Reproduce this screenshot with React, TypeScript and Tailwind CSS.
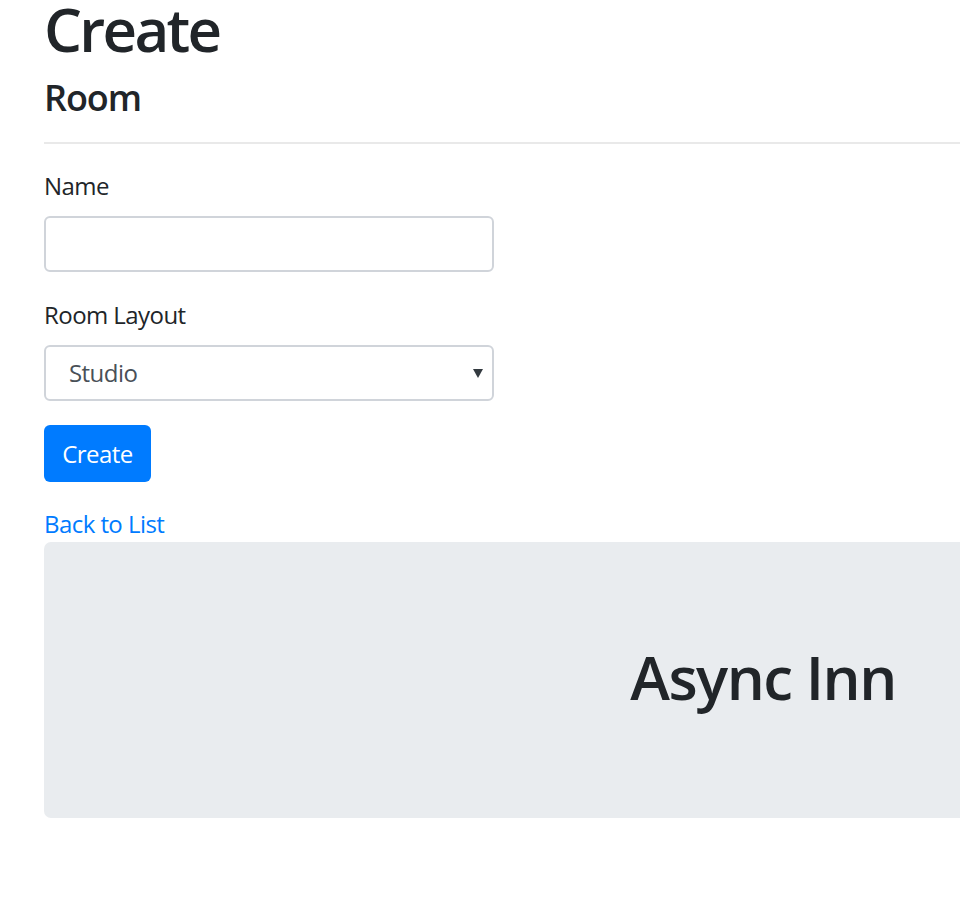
import React from 'react';

const fontStack = "[font-family:'Open_Sans','Noto_Sans',sans-serif]";

export default function App() {
  return (
    <div className={`w-full min-h-screen overflow-hidden bg-white text-[#212529] tracking-[-0.035em] ${fontStack}`}>
      <div className="ml-[44px] w-[1438px]">
        <h1 className="text-[60px] leading-[58px] font-semibold tracking-[-0.045em]">Create</h1>
        <h4 className="mt-[18px] text-[36px] leading-[43px] font-semibold tracking-[-0.03em]">Room</h4>
        <div className="mt-[23px] h-[2px] bg-[#e9e9e9]" />

        <form className="w-[450px]">
          <div className="mt-[24px]">
            <label className="block text-[24px] leading-[36px]">Name</label>
            <input
              type="text"
              className="mt-[12px] block h-[56px] w-full rounded-[6px] border-2 border-[#d0d4da] bg-white px-[18px] text-[24px] text-[#495057] outline-none"
            />
          </div>

          <div className="mt-[25px]">
            <label className="block text-[24px] leading-[36px]">Room Layout</label>
            <div className="relative mt-[12px] flex h-[56px] w-full items-center rounded-[6px] border-2 border-[#d0d4da] bg-white pl-[23px]">
              <span className="text-[24px] text-[#495057]">Studio</span>
              <svg className="absolute right-[9px] top-[22px]" width="10" height="9" viewBox="0 0 10 9">
                <path d="M0 0 L10 0 L5 9 Z" fill="#333a40" />
              </svg>
            </div>
          </div>

          <button
            type="button"
            className="mt-[24px] flex h-[57px] w-[107px] items-center justify-center rounded-[6px] bg-[#007bff] text-[24px] text-white"
          >
            Create
          </button>
        </form>

        <div className="mt-[24px] h-[36px] text-[24px] leading-[36px]">
          <a href="#" className="text-[#007bff]">Back to List</a>
        </div>

        <div className="rounded-[7px] bg-[#e9ecef] pt-[99px] pb-[105px] text-center">
          <h1 className="text-[60px] leading-[72px] font-semibold tracking-[-0.025em]">Async Inn</h1>
        </div>
      </div>
    </div>
  );
}
